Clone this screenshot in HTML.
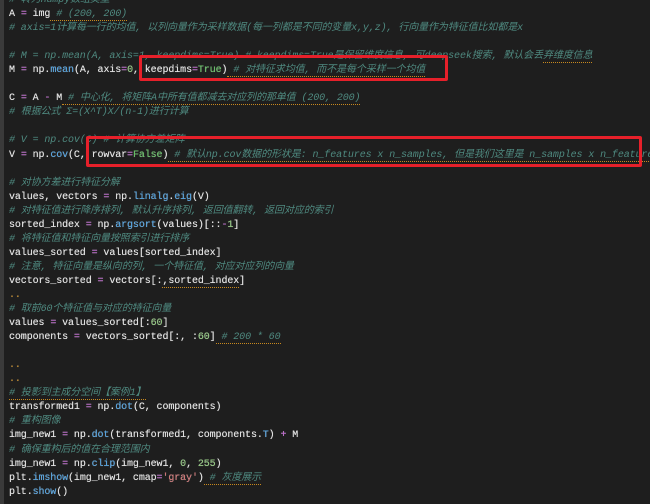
<!DOCTYPE html>
<html><head><meta charset="utf-8"><style>
html,body{margin:0;padding:0;width:650px;height:504px;overflow:hidden;background:#1e1e1e}
.g{position:absolute;left:0;top:0;width:4px;height:504px;background:#3a3a3a}
.c{position:absolute;left:9px;top:-6px;font:10px/14.05px "Liberation Mono","Noto Sans CJK SC",monospace;color:#e2e2e2;white-space:pre;letter-spacing:-0.1px;text-shadow:0 0 0.4px #e2e2e2}
.cm{color:#4f8a80;font-style:italic;text-shadow:none}
.o{color:#c05fd0}
.n{color:#8cc57a}
.f{color:#4a9fe0}
.k{color:#5fbf5f}
.s{color:#d07070}
.u{border-bottom:1px dotted #c8891e}
.dd{color:#c8891e}
.box{position:absolute;border:3px solid #e6202a;border-radius:2px}
</style></head><body>
<div class="g"></div>
<div class="c"><span class="cm"># 转为numpy数组类型</span>
A <span class="o">=</span> img<span class="cm u"> # (200, 200)</span>
<span class="cm"># axis=1计算每一行的均值, 以列向量作为采样数据(每一列都是不同的变量x,y,z), 行向量作为特征值比如都是x</span>

<span class="cm"># M = np.mean(A, axis=1, keepdims=True) # keepdims=True是保留维度信息, 可deepseek搜索, 默认会丢<span class="u">弃维度信息</span></span>
M <span class="o">=</span> np.<span class="f">mean</span>(A, axis<span class="o">=</span><span class="n">0</span>, keepdims<span class="o">=</span><span class="k">True</span>)<span class="cm u"> # 对特征求均值, 而不是每个采样一个均值</span>

C <span class="o">=</span> A <span class="o">-</span> M<span class="cm u"> # 中心化, 将矩阵A中所有值都减去对应列的那单值 (200, 200)</span>
<span class="cm"># 根据公式 Σ=(X^T)X/(n-1)进行计算</span>

<span class="cm"># V = np.cov(C) # 计算协方差矩阵</span>
V <span class="o">=</span> np.<span class="f">cov</span>(C, rowvar<span class="o">=</span><span class="k">False</span>)<span class="cm u"> # 默认np.cov数据的形状是: n_features x n_samples, 但是我们这里是 n_samples x n_features</span>

<span class="cm"># 对协方差进行特征分解</span>
values, vectors <span class="o">=</span> np.<span class="f">linalg</span>.<span class="f">eig</span>(V)
<span class="cm"># 对特征值进行降序排列, 默认升序排列, 返回值翻转, 返回对应的索引</span>
sorted_index <span class="o">=</span> np.<span class="f">argsort</span>(values)[::<span class="o">-</span><span class="n">1</span>]
<span class="cm"># 将特征值和特征向量按照索引进行排序</span>
values_sorted <span class="o">=</span> values[sorted_index]
<span class="cm"># 注意, 特征向量是纵向的列, 一个特征值, 对应对应列的向量</span>
vectors_sorted <span class="o">=</span> vectors[:<span class="u">,sorted_index</span>]
<span class="dd">..</span>
<span class="cm"># 取前60个特征值与对应的特征向量</span>
values <span class="o">=</span> values_sorted[:<span class="n">60</span>]
components <span class="o">=</span> vectors_sorted[:, :<span class="n">60</span>]<span class="cm u"> # 200 * 60</span>

<span class="dd">..</span>
<span class="dd">..</span>
<span class="cm u"># 投影到主成分空间【案例1】</span>
transformed1 <span class="o">=</span> np.<span class="f">dot</span>(C, components)
<span class="cm"># 重构图像</span>
img_new1 <span class="o">=</span> np.<span class="f">dot</span>(transformed1, components.<span class="f">T</span>) <span class="o">+</span> M
<span class="cm"># 确保重构后的值在合理范围内</span>
img_new1 <span class="o">=</span> np.<span class="f">clip</span>(img_new1, <span class="n">0</span>, <span class="n">255</span>)
plt.<span class="f">imshow</span>(img_new1, cmap<span class="o">=</span><span class="s">'gray'</span>)<span class="cm u"> # 灰度展示</span>
plt.<span class="f">show</span>()</div>
<div class="box" style="left:139px;top:55px;width:303px;height:20px"></div>
<div class="box" style="left:86px;top:136px;width:550px;height:25px"></div>
</body></html>
